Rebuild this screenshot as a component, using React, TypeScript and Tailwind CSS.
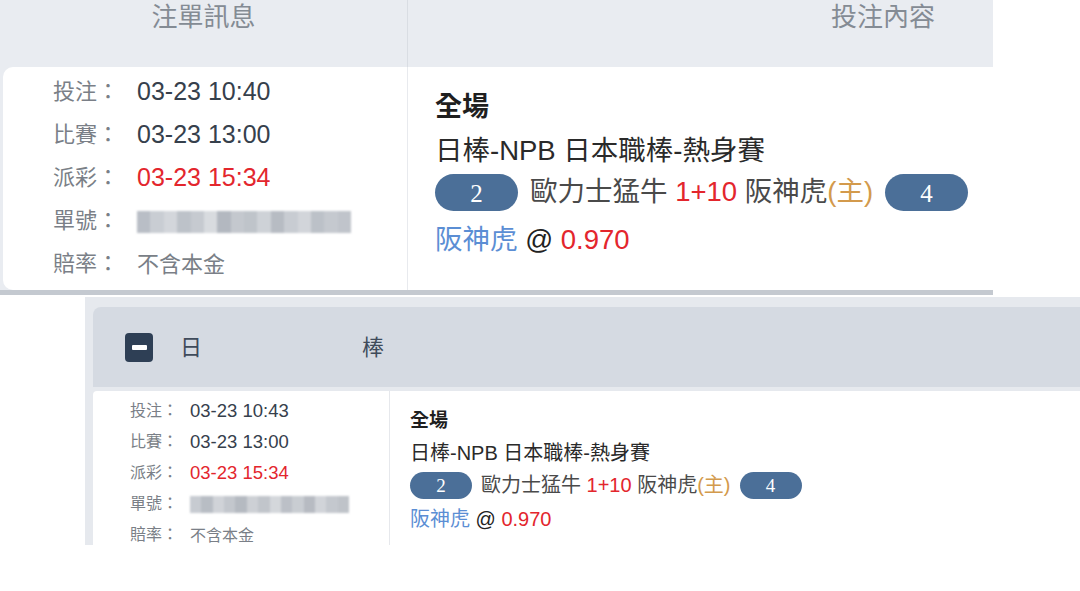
import React from "react";

const font = "font-['Liberation_Sans','Noto_Sans_CJK_TC',sans-serif]";

type Row = { label: string; value: React.ReactNode; red?: boolean };

// pixelated, blurred order number
function Blurred({ w, h, blocks }: { w: number; h: number; blocks: string[] }) {
  return (
    <span
      className="inline-flex overflow-hidden align-middle blur-[1px]"
      style={{ width: w, height: h }}
    >
      {blocks.map((c, i) => (
        <span key={i} className="h-full flex-1" style={{ background: c }} />
      ))}
    </span>
  );
}

const topBlocks = [
  "#b9bec6", "#c9cdd3", "#d3d6db", "#bdc2c9", "#c6cad0", "#d8dbdf", "#b3b8c0",
  "#c4c8ce", "#bfc4ca", "#ced2d7", "#b7bcc3", "#c8ccd2", "#d2d5da", "#bcc1c8",
  "#c5c9cf", "#c0c4cb",
];
const bottomBlocks = [
  "#c7cbd1", "#b8bdc4", "#d0d3d8", "#c3c7cd", "#b5bac1", "#cdd0d5", "#c1c5cb",
  "#d4d7db", "#bcc0c7", "#c9cdd2", "#b7bbc2", "#d1d4d9", "#c4c8ce", "#bfc3c9",
];

function Pill({ n, big }: { n: string; big?: boolean }) {
  return (
    <span
      className={
        big
          ? "inline-flex h-[37px] w-[83px] items-center justify-center rounded-full bg-[#4b6f98] pt-[3px] font-['Liberation_Serif',serif] text-[25px] text-white"
          : "inline-flex h-[27px] w-[62px] items-center justify-center rounded-full bg-[#4b6f98] pt-[2px] font-['Liberation_Serif',serif] text-[19px] text-white"
      }
    >
      {n}
    </span>
  );
}

function BetDetail({ big }: { big?: boolean }) {
  return (
    <div
      className={
        big
          ? "flex flex-col pl-[27px] pt-[18px] text-[27.5px]"
          : "flex flex-col pl-[20px] pt-[14px] text-[20px]"
      }
    >
      <div
        className={
          big
            ? "text-[27px] font-bold leading-[44px] text-[#1f1f1f]"
            : "text-[19px] font-bold leading-[32px] text-[#1f1f1f]"
        }
      >
        全場
      </div>
      <div className={big ? "leading-[44px] text-[#2a2a2a]" : "leading-[32px] text-[#2a2a2a]"}>
        日棒-NPB 日本職棒-熱身賽
      </div>
      <div
        className={
          big
            ? "flex h-[38px] items-center gap-[12px] text-[#4a4a4a]"
            : "flex h-[32px] items-center gap-[9px] text-[#4a4a4a]"
        }
      >
        <Pill n="2" big={big} />
        <span className="whitespace-pre">
          歐力士猛牛 <span className="text-[#e3262d]">1+10</span> 阪神虎
          <span className="text-[#d39a4c]">(主)</span>
        </span>
        <Pill n="4" big={big} />
      </div>
      <div className={big ? "mt-[7px] leading-[44px]" : "mt-[2px] leading-[32px]"}>
        <span className="text-[#5b8ed4]">阪神虎</span>
        <span className="text-[#222]"> @ </span>
        <span className="text-[#e3262d]">0.970</span>
      </div>
    </div>
  );
}

function InfoRows({ rows, big }: { rows: Row[]; big?: boolean }) {
  return (
    <div className={big ? "pl-[50px] pt-[3px]" : "pl-[37px] pt-[4px]"}>
      {rows.map((r) => (
        <div
          key={r.label}
          className={big ? "flex h-[43px] items-center" : "flex h-[31px] items-center"}
        >
          <span
            className={
              big
                ? "w-[84px] shrink-0 text-[22px] text-[#7a7f87]"
                : "w-[60px] shrink-0 text-[16px] text-[#7a7f87]"
            }
          >
            {r.label}
          </span>
          <span
            className={
              (big ? "text-[25px] " : "text-[18.5px] ") +
              (r.red ? "text-[#e3262d]" : "text-[#36404c]")
            }
          >
            {r.value}
          </span>
        </div>
      ))}
    </div>
  );
}

export default function App() {
  const topRows: Row[] = [
    { label: "投注：", value: "03-23 10:40" },
    { label: "比賽：", value: "03-23 13:00" },
    { label: "派彩：", value: "03-23 15:34", red: true },
    { label: "單號：", value: <Blurred w={214} h={22} blocks={topBlocks} /> },
    { label: "賠率：", value: <span className="text-[22px] text-[#7a7f87]">不含本金</span> },
  ];
  const bottomRows: Row[] = [
    { label: "投注：", value: "03-23 10:43" },
    { label: "比賽：", value: "03-23 13:00" },
    { label: "派彩：", value: "03-23 15:34", red: true },
    { label: "單號：", value: <Blurred w={159} h={17} blocks={bottomBlocks} /> },
    { label: "賠率：", value: <span className="text-[16px] text-[#7a7f87]">不含本金</span> },
  ];

  return (
    <div className={`h-[591px] w-[1080px] overflow-hidden bg-white ${font}`}>
      {/* first screenshot */}
      <div className="w-[993px] bg-[#e9ecf1]">
        <div className="flex h-[67px]">
          <div className="w-[408px] border-r border-[#d9dde3] text-center text-[26px] leading-[34px] text-[#848b94]">
            注單訊息
          </div>
          <div className="flex-1 pr-[58px] text-right text-[26px] leading-[34px] text-[#848b94]">
            投注內容
          </div>
        </div>
        <div className="ml-[3px] flex h-[223px] rounded-l-[10px] bg-white">
          <div className="w-[405px] shrink-0 border-r border-[#e8eaee]">
            <InfoRows rows={topRows} big />
          </div>
          <div className="flex-1">
            <BetDetail big />
          </div>
        </div>
        <div className="h-[5px] bg-[#c4c9d0]" />
      </div>

      {/* second screenshot */}
      <div className="ml-[85px] mt-[2px] h-[248px] bg-[#e6e9ee] pl-[8px] pt-[10px]">
        <div className="flex h-[80px] items-center rounded-tl-[8px] bg-[#d5dae2] pl-[32px] text-[22px] text-[#3f4b5b]">
          <span className="flex h-[29px] w-[28px] items-center justify-center rounded-[4px] bg-[#2e3f55]">
            <span className="h-[5px] w-[15px] rounded-[1px] bg-white" />
          </span>
          <span className="ml-[27px]">日</span>
          <span className="ml-[160px]">棒</span>
        </div>
        <div className="mt-[4px] flex h-[154px] rounded-tl-[4px] bg-white">
          <div className="w-[297px] shrink-0 border-r border-[#e6e8ec]">
            <InfoRows rows={bottomRows} />
          </div>
          <div className="flex-1">
            <BetDetail />
          </div>
        </div>
      </div>
    </div>
  );
}
